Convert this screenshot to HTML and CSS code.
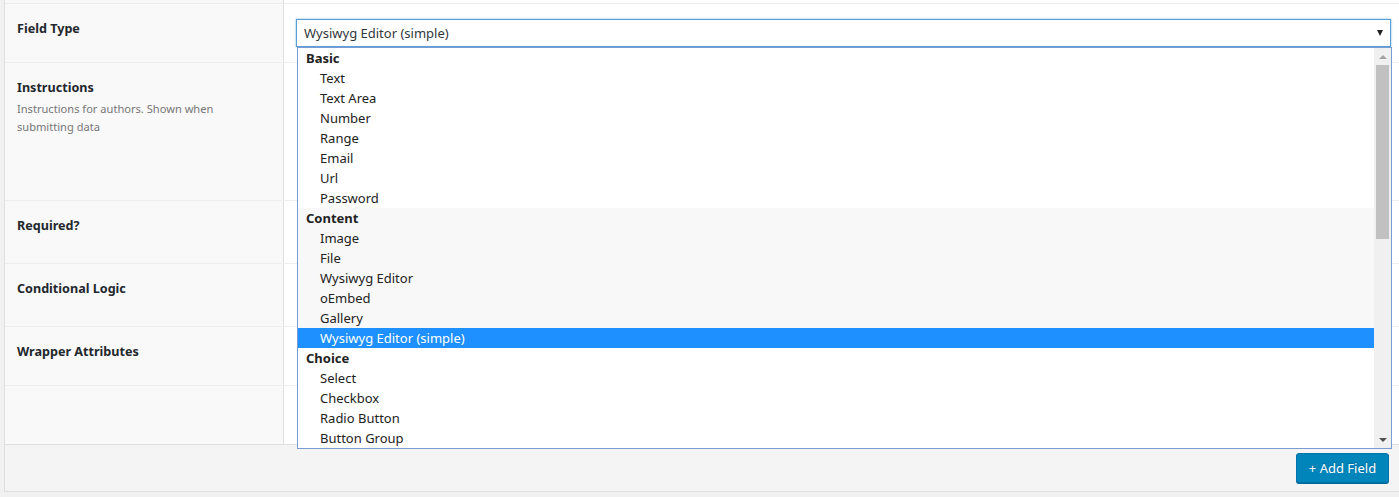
FILE: index.html
```html
<!DOCTYPE html>
<html>
<head>
<meta charset="utf-8">
<link rel="stylesheet" href="styles.css">
</head>
<body>
<div class="page">
  <div class="settings">
    <div class="row row-prev"><div class="label"></div><div class="input"></div></div>
    <div class="row row-type">
      <div class="label"><span class="name">Field Type</span></div>
      <div class="input">
        <div class="select">
          <span class="select-value">Wysiwyg Editor (simple)</span>
          <span class="select-arrow"></span>
        </div>
      </div>
    </div>
    <div class="row row-instr">
      <div class="label"><span class="name">Instructions</span><p class="desc">Instructions for authors. Shown when submitting data</p></div>
      <div class="input"></div>
    </div>
    <div class="row row-std">
      <div class="label"><span class="name">Required?</span></div>
      <div class="input"></div>
    </div>
    <div class="row row-std">
      <div class="label"><span class="name">Conditional Logic</span></div>
      <div class="input"></div>
    </div>
    <div class="row row-wrap">
      <div class="label"><span class="name">Wrapper Attributes</span></div>
      <div class="input"></div>
    </div>
    <div class="row row-wrap row-last">
      <div class="label"></div>
      <div class="input"></div>
    </div>
    <div class="footer">
      <button class="add-btn">+ Add Field</button>
    </div>
  </div>

  <div class="dropdown">
    <ul class="options">
      <li class="group">Basic</li>
      <li class="opt">Text</li>
      <li class="opt">Text Area</li>
      <li class="opt">Number</li>
      <li class="opt">Range</li>
      <li class="opt">Email</li>
      <li class="opt">Url</li>
      <li class="opt">Password</li>
      <li class="group shaded">Content</li>
      <li class="opt shaded">Image</li>
      <li class="opt shaded">File</li>
      <li class="opt shaded">Wysiwyg Editor</li>
      <li class="opt shaded">oEmbed</li>
      <li class="opt shaded">Gallery</li>
      <li class="opt selected">Wysiwyg Editor (simple)</li>
      <li class="group">Choice</li>
      <li class="opt">Select</li>
      <li class="opt">Checkbox</li>
      <li class="opt">Radio Button</li>
      <li class="opt">Button Group</li>
    </ul>
    <div class="scrollbar">
      <span class="sb-arrow sb-up"></span>
      <div class="sb-track"><div class="sb-thumb"></div></div>
      <span class="sb-arrow sb-down"></span>
    </div>
  </div>
</div>
</body>
</html>
```

FILE: styles.css
```css
html, body {
  margin: 0;
  padding: 0;
  background: #f1f1f1;
  overflow: hidden;
  font-family: "Noto Sans", "Open Sans", sans-serif;
  font-size: 13px;
  color: #23282d;
}

.page {
  position: relative;
  width: 1399px;
  height: 497px;
  overflow: hidden;
}

.settings {
  box-sizing: border-box;
  margin-left: 4px;
  width: 1400px;
  border-left: 1px solid #dfdfdf;
  border-right: 1px solid #dfdfdf;
  background: #fff;
}

.row {
  display: grid;
  grid-template-columns: 279px 1fr;
  border-bottom: 1px solid #eeeeee;
}

.label {
  background: #f9f9f9;
  border-right: 1px solid #e1e1e1;
  padding: 15px 12px 0 12px;
}

.input {
  padding: 15px 12px 0 12px;
}

.row-prev { height: 3px; }
.row-prev .label, .row-prev .input { padding: 0; }
.row-type { height: 58px; }
.row-instr { height: 137px; }
.row-std { height: 62px; }
.row-wrap { height: 58px; }
.row-last { border-bottom: 1px solid #dfdfdf; }

.name {
  display: block;
  font-weight: 700;
  font-size: 12.6px;
  line-height: 20px;
  color: #23282d;
}

.desc {
  margin: 2px 0 0;
  font-size: 11.1px;
  line-height: 18px;
  color: #777;
}

.select {
  box-sizing: border-box;
  height: 28px;
  border: 1px solid #5b9dd9;
  box-shadow: 0 0 2px rgba(30, 140, 190, 0.6);
  display: flex;
  align-items: center;
  justify-content: space-between;
  padding: 0 7px 0 7px;
  background: #fff;
}

.select-value {
  font-size: 13px;
  color: #32373c;
}

.select-arrow {
  width: 0;
  height: 0;
  border-left: 3.5px solid transparent;
  border-right: 3.5px solid transparent;
  border-top: 6px solid #222;
}

.footer {
  box-sizing: border-box;
  height: 47px;
  background: #f4f4f4;
  border-bottom: 1px solid #dfdfdf;
  display: flex;
  justify-content: flex-end;
  align-items: flex-start;
  padding-right: 14px;
  padding-top: 8px;
}

.add-btn {
  font-family: inherit;
  font-size: 13px;
  color: #fff;
  background: #0085ba;
  border: 1px solid #0073aa;
  border-radius: 3px;
  box-shadow: 0 1px 0 #006799;
  height: 30px;
  width: 93px;
  padding: 0 10px;
  line-height: 26px;
  text-shadow: 0 -1px 1px #006799;
}

/* open dropdown popup */
.dropdown {
  position: absolute;
  left: 297px;
  top: 47px;
  width: 1095px;
  height: 402px;
  box-sizing: border-box;
  border: 1px solid #7a9cd3;
  background: #fff;
  display: flex;
}

.options {
  list-style: none;
  margin: 0;
  padding: 0;
  flex: 1;
}

.options li {
  height: 20px;
  line-height: 20px;
  font-size: 13px;
  color: #222;
  white-space: nowrap;
}

.group {
  font-weight: 700;
  padding-left: 8px;
}

.opt {
  padding-left: 22px;
}

.shaded { background: #f8f8f8; }

.selected {
  background: #1e90ff;
  color: #fff !important;
}

.scrollbar {
  width: 17px;
  background: #f0f0f0;
  display: flex;
  flex-direction: column;
  align-items: center;
}

.sb-arrow {
  height: 17px;
  width: 17px;
  display: flex;
  align-items: center;
  justify-content: center;
  flex: none;
}

.sb-up::before {
  content: "";
  border-left: 4px solid transparent;
  border-right: 4px solid transparent;
  border-bottom: 4px solid #a3a3a3;
}

.sb-down::before {
  content: "";
  border-left: 4px solid transparent;
  border-right: 4px solid transparent;
  border-top: 4px solid #505050;
}

.sb-track {
  flex: 1;
  width: 13px;
}

.sb-thumb {
  width: 13px;
  height: 174px;
  background: #c1c1c1;
}
```
